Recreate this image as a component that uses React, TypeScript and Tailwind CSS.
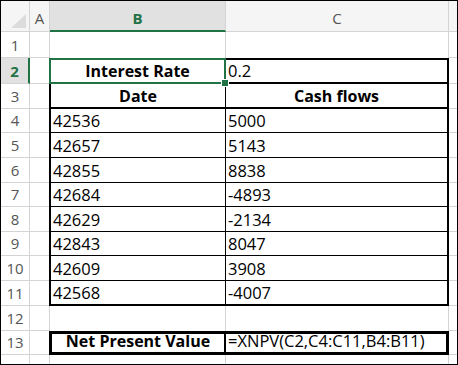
const grid = "border-[#d4d4d4]";

const dates = [42536, 42657, 42855, 42684, 42629, 42843, 42609, 42568];
const flows = [5000, 5143, 8838, -4893, -2134, 8047, 3908, -4007];

const RowHeader = ({ n, selected = false }: { n?: number; selected?: boolean }) => {
  if (selected) {
    return (
      <div className="w-[29px] shrink-0 flex items-end justify-center pb-[2px] bg-[#e1e1e1] border-r-2 border-r-[#217346] border-b border-b-[#d4d4d4] text-[15px] leading-[20px] font-bold text-[#217346]">
        {n}
      </div>
    );
  }
  return (
    <div className={`w-[29px] shrink-0 flex items-end justify-center pb-[2px] border-r border-b ${grid} text-[15px] leading-[20px] text-[#555]`}>
      {n}
    </div>
  );
};

const Row = ({
  n,
  h,
  selected,
  table = true,
  bCls,
  cCls,
  children,
}: {
  n?: number;
  h: string;
  selected?: boolean;
  table?: boolean;
  bCls: string;
  cCls: string;
  children?: [React.ReactNode, React.ReactNode];
}) => (
  <div className={`flex ${h} shrink-0`}>
    <RowHeader n={n} selected={selected} />
    <div className={table ? `w-[19px] shrink-0 border-b ${grid}` : `w-[20px] shrink-0 border-r border-b ${grid}`} />
    <div className={`${table ? "w-[177px]" : "w-[176px]"} shrink-0 relative flex items-end pb-[1px] px-[2px] leading-[20px] ${bCls}`}>
      {children?.[0]}
    </div>
    <div className={`w-[223px] shrink-0 flex items-end pb-[1px] px-[2px] leading-[20px] ${cCls}`}>
      {children?.[1]}
    </div>
    <div className={`flex-1 border-b ${grid}`} />
  </div>
);

const heights = ["h-[24px]", "h-[25px]", "h-[25px]", "h-[24px]", "h-[25px]", "h-[24px]", "h-[25px]", "h-[25px]"];

export default function App() {
  return (
    <div className="w-[458px] h-[365px] border border-black bg-white flex flex-col overflow-hidden font-['Open_Sans',sans-serif] text-[16.5px] text-black">
      {/* column headers */}
      <div className="flex h-[31px] shrink-0">
        <div className={`w-[29px] shrink-0 bg-[#f5f5f5] border-r border-b ${grid} flex items-end justify-end pr-[3px] pb-[3px]`}>
          <svg width="15" height="14" viewBox="0 0 15 14">
            <polygon points="15,0 15,14 0,14" fill="#dcdcdc" />
          </svg>
        </div>
        <div className={`w-[20px] shrink-0 bg-[#f5f5f5] border-r border-b ${grid} flex items-end justify-center pb-[3px] text-[15px] leading-[20px] text-[#555]`}>
          A
        </div>
        <div className="w-[176px] shrink-0 bg-[#e1e1e1] border-r border-r-[#d4d4d4] border-b-2 border-b-[#217346] flex items-end justify-center pb-[2px] text-[15px] leading-[20px] font-bold text-[#217346]">
          B
        </div>
        <div className={`w-[223px] shrink-0 bg-[#f5f5f5] border-r border-b ${grid} flex items-end justify-center pb-[3px] text-[15px] leading-[20px] text-[#555]`}>
          C
        </div>
        <div className={`flex-1 bg-[#f5f5f5] border-b ${grid}`} />
      </div>

      <Row n={1} h="h-[26px]" table={false} bCls={`border-r ${grid}`} cCls={`border-r ${grid}`} />

      <Row
        n={2}
        h="h-[26px]"
        selected
        bCls="border-2 border-[#217346] justify-center font-bold text-[16px]"
        cCls="border-t-2 border-r-2 border-b-2 border-black"
      >
        {[
          <>
            <span className="pt-[1px]">Interest Rate</span>
            <span className="absolute right-[-5px] bottom-[-5px] w-[8px] h-[8px] bg-[#217346] border border-white z-10" />
          </>,
          <span>0.2</span>,
        ]}
      </Row>

      <Row
        n={3}
        h="h-[25px]"
        bCls="border-l-2 border-r border-b-2 border-black justify-center font-bold text-[16px]"
        cCls="border-r-2 border-b-2 border-black justify-center font-bold text-[16px]"
      >
        {[<span>Date</span>, <span>Cash flows</span>]}
      </Row>

      {dates.map((d, i) => {
        const last = i === dates.length - 1;
        return (
          <Row
            key={d}
            n={i + 4}
            h={heights[i]}
            bCls={`border-l-2 border-r border-black ${last ? "border-b-2" : "border-b"}`}
            cCls={`border-r-2 border-black ${last ? "border-b-2" : "border-b"}`}
          >
            {[<span>{d}</span>, <span>{flows[i]}</span>]}
          </Row>
        );
      })}

      <Row n={12} h="h-[25px]" table={false} bCls={`border-r ${grid}`} cCls={`border-r ${grid}`} />

      <Row
        n={13}
        h="h-[24px]"
        bCls="border-l-[3px] border-t-[3px] border-b-[3px] border-r-2 border-black justify-center font-bold text-[16px]"
        cCls="border-t-[3px] border-r-[3px] border-b-[3px] border-black"
      >
        {[<span>Net Present Value</span>, <span>=XNPV(C2,C4:C11,B4:B11)</span>]}
      </Row>

      <Row h="h-[24px]" table={false} bCls={`border-r border-b ${grid}`} cCls={`border-r border-b ${grid}`} />
    </div>
  );
}
